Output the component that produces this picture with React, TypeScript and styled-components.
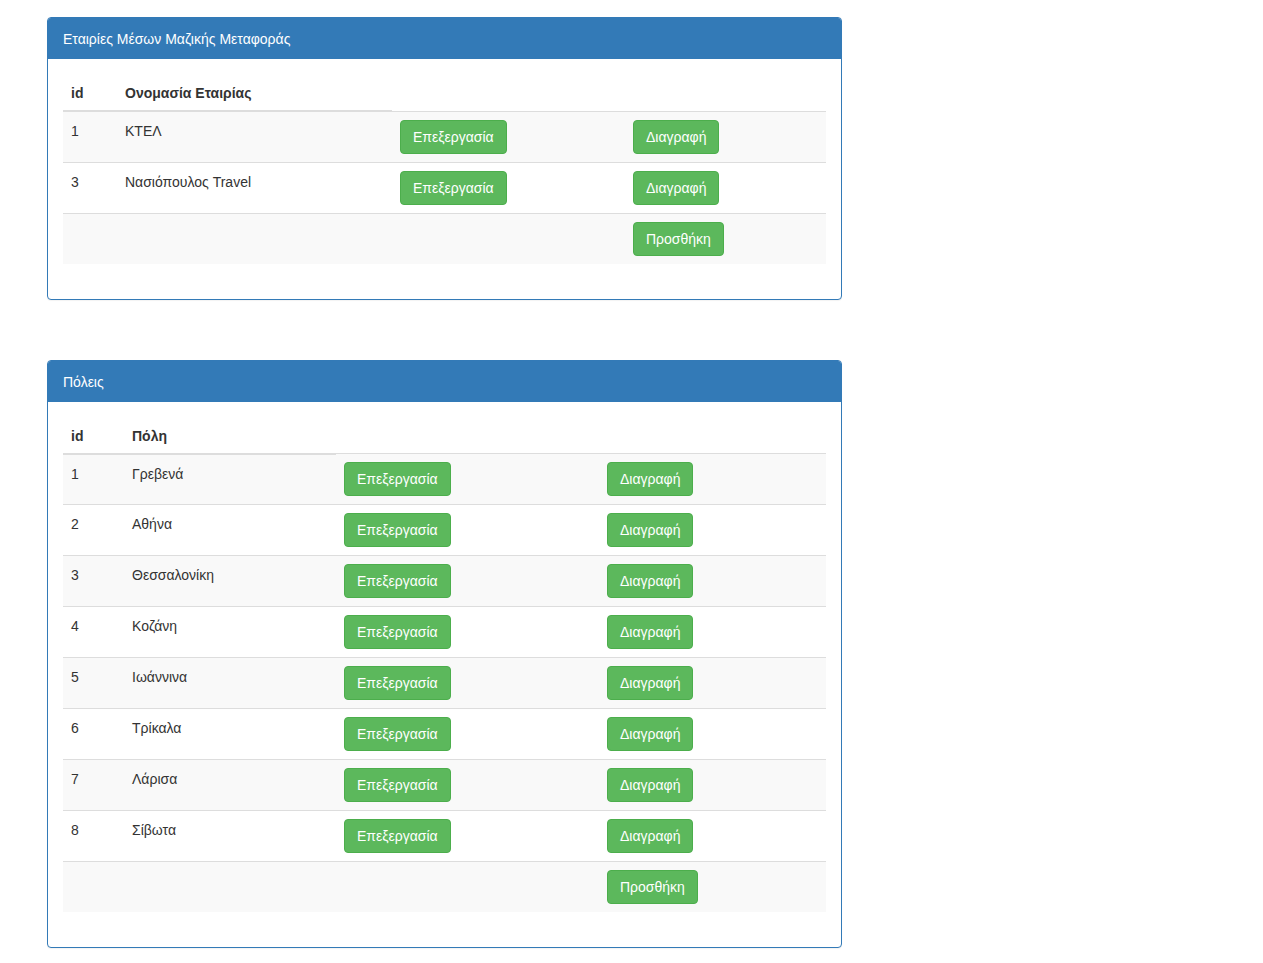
import React from 'react';
import styled, { createGlobalStyle } from 'styled-components';

const GlobalStyle = createGlobalStyle`
  html, body {
    margin: 0;
    padding: 0;
    background: #fff;
  }
  body {
    font-family: "Liberation Sans", Arial, Helvetica, sans-serif;
    font-size: 14px;
    line-height: 1.42857143;
    color: #333;
  }
  * {
    box-sizing: border-box;
  }
`;

const Page = styled.div`
  display: flex;
  flex-direction: column;
  gap: 60px;
  padding: 17px 0 20px 47px;
`;

const Panel = styled.div`
  width: 795px;
  background: #fff;
  border: 1px solid #337ab7;
  border-radius: 4px;
  box-shadow: 0 1px 1px rgba(0, 0, 0, 0.05);
`;

const PanelHeading = styled.div`
  padding: 11px 15px 9px;
  line-height: 20px;
  color: #fff;
  background: #337ab7;
  border-bottom: 1px solid #337ab7;
  border-top-left-radius: 3px;
  border-top-right-radius: 3px;
`;

const PanelBody = styled.div`
  padding: 15px;
`;

const Table = styled.table`
  width: 100%;
  margin-bottom: 20px;
  border-collapse: collapse;
  border-spacing: 0;
  table-layout: fixed;
`;

const Col = styled.col<{ $w: number }>`
  width: ${(p) => p.$w}px;
`;

const Th = styled.th`
  padding: 9px 8px 7px;
  text-align: left;
  vertical-align: bottom;
  font-weight: bold;
  line-height: 20px;
  border-bottom: 2px solid #ddd;
`;

const Row = styled.tr`
  &:nth-of-type(odd) {
    background: #f9f9f9;
  }
`;

const Td = styled.td<{ $text?: boolean }>`
  padding: ${(p) => (p.$text ? '9px 8px 7px' : '8px')};
  vertical-align: top;
  line-height: 20px;
  border-top: 1px solid #ddd;
`;

const Button = styled.button`
  display: inline-block;
  padding: 6px 12px;
  font-family: inherit;
  font-size: 14px;
  line-height: 20px;
  color: #fff;
  background: #5cb85c;
  border: 1px solid #4cae4c;
  border-radius: 4px;
  cursor: pointer;
  white-space: nowrap;

  &:hover {
    background: #449d44;
  }
`;

type Item = { id: number; name: string };

const companies: Item[] = [
  { id: 1, name: 'ΚΤΕΛ' },
  { id: 3, name: 'Νασιόπουλος Travel' },
];

const cities: Item[] = [
  { id: 1, name: 'Γρεβενά' },
  { id: 2, name: 'Αθήνα' },
  { id: 3, name: 'Θεσσαλονίκη' },
  { id: 4, name: 'Κοζάνη' },
  { id: 5, name: 'Ιωάννινα' },
  { id: 6, name: 'Τρίκαλα' },
  { id: 7, name: 'Λάρισα' },
  { id: 8, name: 'Σίβωτα' },
];

function ListPanel({
  title,
  column,
  items,
  cols,
}: {
  title: string;
  column: string;
  items: Item[];
  cols: number[];
}) {
  return (
    <Panel>
      <PanelHeading>{title}</PanelHeading>
      <PanelBody>
        <Table>
          <colgroup>
            {cols.map((w, i) => (
              <Col key={i} $w={w} />
            ))}
          </colgroup>
          <thead>
            <tr>
              <Th>id</Th>
              <Th>{column}</Th>
            </tr>
          </thead>
          <tbody>
            {items.map((it) => (
              <Row key={it.id}>
                <Td $text>{it.id}</Td>
                <Td $text>{it.name}</Td>
                <Td>
                  <Button>Επεξεργασία</Button>
                </Td>
                <Td>
                  <Button>Διαγραφή</Button>
                </Td>
              </Row>
            ))}
            <Row>
              <Td />
              <Td />
              <Td />
              <Td>
                <Button>Προσθήκη</Button>
              </Td>
            </Row>
          </tbody>
        </Table>
      </PanelBody>
    </Panel>
  );
}

export default function App() {
  return (
    <>
      <GlobalStyle />
      <Page>
        <ListPanel
          title="Εταιρίες Μέσων Μαζικής Μεταφοράς"
          column="Ονομασία Εταιρίας"
          items={companies}
          cols={[54, 275, 233, 201]}
        />
        <ListPanel title="Πόλεις" column="Πόλη" items={cities} cols={[61, 212, 263, 227]} />
      </Page>
    </>
  );
}
